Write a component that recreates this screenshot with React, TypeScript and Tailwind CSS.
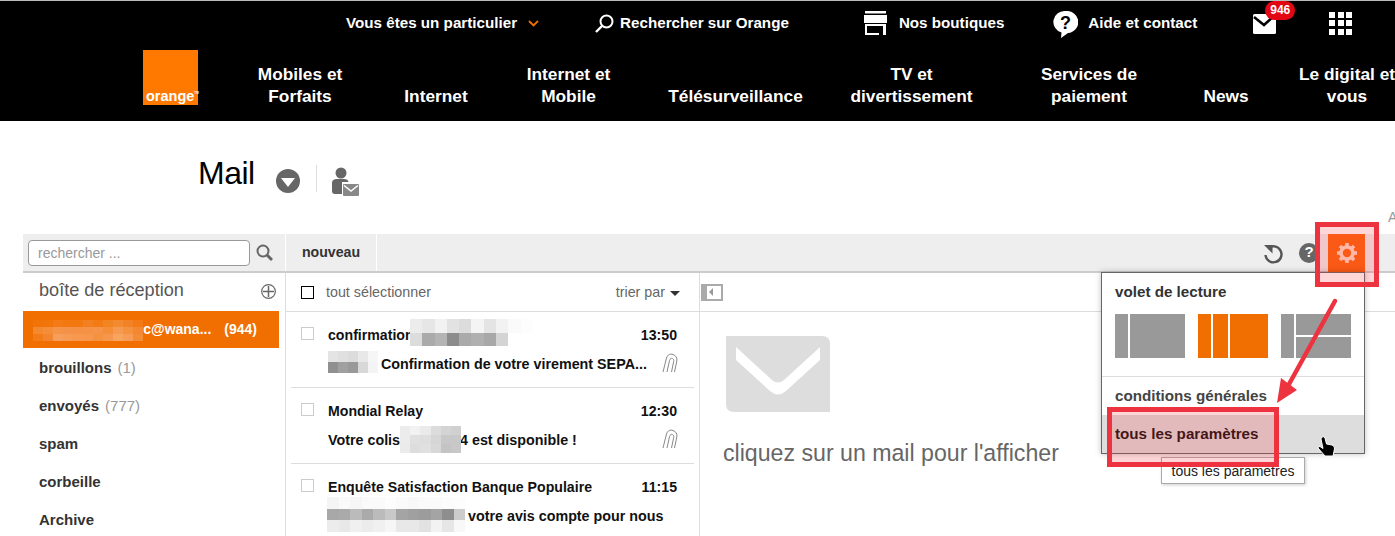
const topLinks = "flex items-center text-[15.2px] font-bold text-white";

const navItems = [
  { lines: ["Mobiles et", "Forfaits"], w: "w-[136px]" },
  { lines: ["Internet"], w: "w-[136px]" },
  { lines: ["Internet et", "Mobile"], w: "w-[129px]" },
  { lines: ["Télésurveillance"], w: "w-[205px]" },
  { lines: ["TV et", "divertissement"], w: "w-[147px]" },
  { lines: ["Services de", "paiement"], w: "w-[208px]" },
  { lines: ["News"], w: "w-[66px]" },
  { lines: ["Le digital et", "vous"], w: "w-[176px]" },
];

const folders = [
  { name: "brouillons", count: "(1)" },
  { name: "envoyés", count: "(777)" },
  { name: "spam" },
  { name: "corbeille" },
  { name: "Archive" },
];

// pixelated patches that hide private data in the screenshot
const Mosaic = ({
  className,
  cell,
  rowH,
  cols,
  colors,
}: {
  className: string;
  cell: number;
  rowH: number;
  cols: number;
  colors: string[];
}) => (
  <div
    className={`absolute grid ${className}`}
    style={{ gridTemplateColumns: `repeat(${cols}, ${cell}px)`, gridAutoRows: `${rowH}px` }}
  >
    {colors.map((c, i) => (
      <div key={i} style={{ background: c }} />
    ))}
  </div>
);

const Clip = () => (
  <svg width="16" height="20" viewBox="0 0 16 20" fill="none" stroke="#888" strokeWidth="1" className="absolute right-[16px] bottom-[14px]">
    <path d="M1 19 L4.500 5 C5.500 1.500 8.500 0.500 11 1.500 C14 2.500 15.500 5 14.800 8 L12.500 19" />
    <path d="M5 19 L7.500 7.500 C8 5.500 9.500 5 10.500 5.500 C11.500 6 12 7 11.700 8.500 L9.500 19" />
  </svg>
);

const Row = ({
  from,
  time,
  children,
}: {
  from: string;
  time: string;
  children: React.ReactNode;
}) => (
  <div className="relative mx-[5px] h-[76px] border-b border-[#ddd] pl-[37px] pr-[17px] pt-[14px] text-[14.3px] font-bold text-[#111]">
    <div className="absolute left-[10px] top-[15px] size-[13px] border border-[#ccc]" />
    <div className="flex h-[20px] items-center justify-between text-[14.15px]">
      <span>{from}</span>
      <span>{time}</span>
    </div>
    <div className="mt-[9px] flex h-[20px] items-center whitespace-nowrap">{children}</div>
  </div>
);

const Thumb = ({ children }: { children: React.ReactNode }) => (
  <div className="flex h-[44px] w-[70px] gap-[2px]">{children}</div>
);

export default function App() {
  return (
    <div className="relative h-[536px] w-[1395px] overflow-hidden bg-white font-['Liberation_Sans',Arial,sans-serif]">
      <header className="h-[121px] overflow-hidden border-t border-[#bbb] bg-black">
        <div className="flex h-[44px] items-center pl-[346px]">
          <span className={topLinks}>Vous êtes un particulier</span>
          <svg width="11" height="7" viewBox="0 0 11 7" fill="none" stroke="#f16e00" strokeWidth="1.800" className="ml-[11px]">
            <path d="M1 1 L5.500 5.500 L10 1" />
          </svg>
          <svg width="19" height="19" viewBox="0 0 19 19" fill="none" stroke="#fff" strokeWidth="2" className="ml-[56px]">
            <circle cx="11.500" cy="7.500" r="6" />
            <path d="M7 12 L1 18" strokeWidth="2.400" />
          </svg>
          <span className={`${topLinks} ml-[6px]`}>Rechercher sur Orange</span>
          <svg width="23" height="24" viewBox="0 0 23 24" className="ml-[75px]">
            <rect x="1" y="0" width="21" height="2.500" fill="#fff" />
            <rect x="0" y="4" width="23" height="8" fill="#fff" />
            <path fillRule="evenodd" d="M1 13 H22 V24 H19 V15 H1 Z M1 15 H3 V22 H15 V24 H1 Z" fill="#fff" />
          </svg>
          <span className={`${topLinks} ml-[12px]`}>Nos boutiques</span>
          <div className="relative ml-[49px] size-[25px]">
            <svg width="25" height="27" viewBox="0 0 25 27">
              <path d="M12.500 0 A11.500 11 0 0 1 15 22 L8 27 L8.500 21.500 A11.500 11 0 0 1 12.500 0 Z" fill="#fff" />
              <text x="12.500" y="18" textAnchor="middle" fontSize="18" fontWeight="700" fill="#000">?</text>
            </svg>
          </div>
          <span className={`${topLinks} ml-[10px]`}>Aide et contact</span>
          <div className="relative ml-[56px] h-[21px] w-[25px]">
            <svg width="25" height="21" viewBox="0 0 25 21">
              <rect width="23" height="20" y="1" rx="1.500" fill="#fff" />
              <path d="M1 4 L11 12 L22 2" fill="none" stroke="#000" strokeWidth="2.500" />
            </svg>
            <span className="absolute left-[12px] top-[-12px] flex h-[19px] w-[30px] items-center justify-center rounded-full bg-[#e30613] text-[12px] font-bold text-white">
              946
            </span>
          </div>
          <div className="ml-[51px] grid grid-cols-3 gap-[2.5px]">
            {Array.from({ length: 9 }).map((_, i) => (
              <div key={i} className="size-[6px] bg-white" />
            ))}
          </div>
        </div>
        <div className="flex items-start pl-[143px] pt-[5px]">
          <div className="flex size-[55px] shrink-0 items-end bg-[#ff7900] pl-[3px] text-[14.5px] font-bold leading-[17px] text-white">
            orange
            <span className="mb-[10px] text-[3px] leading-none">TM</span>
          </div>
          <div className="ml-[34px] flex h-[57px] shrink-0 items-end text-[17.3px] font-bold leading-[22px] text-white">
            {navItems.map((n) => (
              <div key={n.lines[0]} className={`${n.w} shrink-0 text-center whitespace-nowrap`}>
                {n.lines.map((l) => (
                  <div key={l}>{l}</div>
                ))}
              </div>
            ))}
          </div>
        </div>
      </header>

      <div className="flex h-[113px] items-start pl-[198px] pt-[34px]">
        <h1 className="text-[32px] leading-[36px] tracking-[-0.5px] text-black">Mail</h1>
        <div className="ml-[21px] mt-[14px] flex size-[24px] items-center justify-center rounded-full bg-[#666]">
          <div className="mt-[3px] border-x-[7px] border-t-[9px] border-x-transparent border-t-white" />
        </div>
        <div className="ml-[16px] mt-[10px] h-[27px] w-px bg-[#ddd]" />
        <svg width="28" height="29" viewBox="0 0 28 29" className="ml-[15px] mt-[12px]">
          <circle cx="9" cy="6" r="5.500" fill="#666" />
          <path d="M0 24 V16 Q0 12 5 12 H12 Q16 12 16.500 15 H10 V27 H3 Q0 27 0 24 Z" fill="#666" />
          <rect x="11" y="17" width="16" height="12" rx="1" fill="#888" />
          <path d="M12 18.500 L19 24 L26 18.500" fill="none" stroke="#fff" strokeWidth="1.500" />
        </svg>
      </div>

      <div className="ml-[23px] flex h-[39px] border-b-2 border-[#ccc] bg-[#eee]">
        <div className="flex w-[263px] shrink-0 items-center border-r border-white pl-[5px]">
          <div className="flex h-[26px] w-[222px] items-center rounded-[4px] border border-[#999] bg-white pl-[9px] pt-[1px] text-[14px] text-[#999]">
            rechercher ...
          </div>
          <svg width="17" height="18" viewBox="0 0 17 18" fill="none" stroke="#666" className="ml-[6px]">
            <circle cx="7" cy="7" r="5.500" strokeWidth="2" />
            <path d="M11 11 L16 16" strokeWidth="3" />
          </svg>
        </div>
        <div className="flex w-[91px] shrink-0 items-center justify-center border-r border-white pt-[1px] text-[14.15px] font-bold text-[#333]">
          nouveau
        </div>
        <div className="flex flex-1 items-center justify-end pr-[30px]">
          <svg width="20" height="21" viewBox="0 0 20 21" fill="none" className="mr-[16px] mt-[2px]">
            <path d="M5 5.500 A8 8 0 1 1 2.500 12" stroke="#555" strokeWidth="2.400" />
            <path d="M1 2 L9.500 2 L9.500 10.500 Z" fill="#555" />
          </svg>
          <div className="mr-[9px] flex size-[20px] items-center justify-center rounded-full bg-[#666] text-[15px] font-bold text-white">
            ?
          </div>
          <div className="flex h-[38px] w-[37px] items-center justify-center self-start bg-[#f9630d]">
            <svg width="20" height="20" viewBox="0 0 20 20" fill="none" stroke="#ffd9c4">
              <circle cx="10" cy="10" r="6" strokeWidth="3.600" />
              <path strokeWidth="3.500" d="M10 0 V3 M10 17 V20 M0 10 H3 M17 10 H20 M2.900 2.900 L5 5 M15 15 L17.100 17.100 M2.900 17.100 L5 15 M15 5 L17.100 2.900" />
            </svg>
          </div>
        </div>
      </div>

      <div className="ml-[23px] flex h-[263px]">
        <aside className="w-[263px] shrink-0 border-r border-[#ddd] pr-[6px]">
          <div className="flex h-[38px] items-center justify-between pb-[2px] pl-[16px] pr-[3px] text-[18.1px] text-[#555]">
            boîte de réception
            <svg width="15" height="15" viewBox="0 0 15 15" fill="none" stroke="#666" strokeWidth="1.200">
              <circle cx="7.500" cy="7.500" r="6.800" />
              <path d="M7.500 2 V13 M2 7.500 H13" strokeWidth="1.500" />
            </svg>
          </div>
          <div className="relative flex h-[37px] items-center justify-end bg-[#f16e00] pr-[22px] text-[14px] font-bold text-white">
            <span>c@wana...</span>
            <span className="ml-[13px]">(944)</span>
            <Mosaic
              className="left-[10px] top-[9px]"
              cell={10}
              rowH={7}
              cols={11}
              colors={[
                "#f27409", "#f2750c", "#f37a14", "#f3780f", "#f37810", "#f38020", "#f37a14", "#f38422", "#f38a30", "#f38226", "#f37a14",
                "#f38a30", "#f48e38", "#f59448", "#f5924a", "#f59046", "#f59245", "#f59448", "#f48e38", "#f59a52", "#f4923e", "#f48832",
                "#f37c18", "#f38530", "#f79e5c", "#f79a54", "#f7984e", "#f7964c", "#f59240", "#f6964c", "#f9a45e", "#f79c56", "#f48c36",
              ]}
            />
          </div>
          <ul className="text-[15px] font-bold text-[#333]">
            {folders.map((f) => (
              <li key={f.name} className="flex h-[38px] items-center pl-[16px] pt-[2px]">
                {f.name}
                {f.count && <span className="ml-[6px] font-normal text-[#999]">{f.count}</span>}
              </li>
            ))}
          </ul>
        </aside>

        <section className="w-[414px] shrink-0 border-r border-[#ddd]">
          <div className="flex h-[39px] items-center border-b border-[#ddd] pl-[15px] pr-[19px] text-[14.3px] text-[#666]">
            <div className="size-[13px] border border-black" />
            <span className="ml-[12px] pt-[1px]">tout sélectionner</span>
            <span className="ml-auto pt-[1px]">trier par</span>
            <div className="ml-[5px] mt-[2px] border-x-[5px] border-t-[5px] border-x-transparent border-t-[#333]" />
          </div>
          <Row from="confirmation-" time="13:50">
            <span className="ml-[53px]">Confirmation de votre virement SEPA...</span>
            <Clip />
            <Mosaic
              className="left-[37px] top-[39px]"
              cell={10}
              rowH={11}
              cols={5}
              colors={[
                "#e4e4e4", "#e0e0e0", "#dcdcdc", "#e8e8e8", "#f6f6f6",
                "#909090", "#a0a0a0", "#999", "#d8d8d8", "#f4f4f4",
              ]}
            />
            <Mosaic
              className="left-[119px] top-[7px]"
              cell={12.3}
              rowH={13.5}
              cols={10}
              colors={[
                "#ececec", "#e6e6e6", "#f2f2f2", "#e2e2e2", "#dcdcdc", "#f4f4f4", "#e4e4e4", "#f2f2f2", "#fafafa", "#fdfdfd",
                "#dcdcdc", "#aaa", "#b4b4b4", "#8c8c8c", "#aaa", "#b0b0b0", "#a8a8a8", "#d4d4d4", "#fff", "#fff",
              ]}
            />
          </Row>
          <Row from="Mondial Relay" time="12:30">
            Votre colis
            <span className="ml-[60px]">4 est disponible !</span>
            <Clip />
            <Mosaic
              className="left-[109px] top-[38px]"
              cell={10.2}
              rowH={9}
              cols={6}
              colors={[
                "#ececec", "#f2f2f2", "#eaeaea", "#dcdcdc", "#d4d4d4", "#d0d0d0",
                "#ececec", "#e0e0e0", "#dedede", "#d6d6d6", "#c8c8c8", "#c8c8c8",
                "#ebebeb", "#ddd", "#e0e0e0", "#d8d8d8", "#c4c4c4", "#c8c8c8",
              ]}
            />
          </Row>
          <Row from="Enquête Satisfaction Banque Populaire" time="11:15">
            <span className="ml-[140px]">votre avis compte pour nous</span>
            <Mosaic
              className="left-[36px] top-[33px]"
              cell={11.5}
              rowH={11.5}
              cols={12}
              colors={[
                "#f4f4f4", "#fafafa", "#f6f6f6", "#fafafa", "#fafafa", "#fdfdfd", "#fafafa", "#f8f8f8", "#fafafa", "#fafafa", "#fcfcfc", "#fdfdfd",
                "#a8a8a8", "#aaa", "#bbb", "#aaa", "#bbb", "#c8c8c8", "#a4a4a4", "#a0a0a0", "#9c9c9c", "#a4a4a4", "#8e8e8e", "#ccc",
                "#ececec", "#e8e8e8", "#f0f0f0", "#ececec", "#f0f0f0", "#f6f6f6", "#e8e8e8", "#e8e8e8", "#e2e2e2", "#f2f2f2", "#e6e6e6", "#f8f8f8",
              ]}
            />
          </Row>
        </section>

        <section className="flex-1">
          <div className="flex h-[39px] items-center border-b border-[#ddd]">
            <div className="ml-px flex h-[17px] w-[22px] items-center border-2 border-l-[6px] border-[#aaa] bg-white">
              <div className="ml-[2px] border-y-[4px] border-r-[4px] border-y-transparent border-r-[#999]" />
            </div>
          </div>
          <svg width="104" height="76" viewBox="0 0 104 76" className="ml-[26px] mt-[24px]">
            <path d="M0 0 H96 Q104 0 104 8 V76 H8 Q0 76 0 68 Z" fill="#ddd" />
            <path d="M10 11 L46 44 Q52 49 58 44 L94 11 V24 L60 55 Q52 62 44 55 L10 24 Z" fill="#fff" />
          </svg>
          <p className="ml-[23px] mt-[26px] text-[23.15px] leading-[30px] text-[#666]">cliquez sur un mail pour l'afficher</p>
        </section>
      </div>

      <span className="absolute left-[1388px] top-[207px] text-[14px] text-[#999]">A</span>

      {/* settings menu */}
      <div className="absolute left-[1101px] top-[272px] h-[182px] w-[264px] border border-[#666] bg-white shadow-[0_0_6px_rgba(0,0,0,0.25)]">
        <div className="flex h-[38px] items-center pl-[13px] text-[15.2px] font-bold text-[#333]">volet de lecture</div>
        <div className="ml-[13px] mt-[3px] flex gap-[13px]">
          <Thumb>
            <div className="w-[13px] bg-[#999]" />
            <div className="flex-1 bg-[#999]" />
          </Thumb>
          <Thumb>
            <div className="w-[13px] bg-[#f16e00]" />
            <div className="w-[15px] bg-[#f16e00]" />
            <div className="flex-1 bg-[#f16e00]" />
          </Thumb>
          <Thumb>
            <div className="w-[13px] bg-[#999]" />
            <div className="flex flex-1 flex-col gap-[2px]">
              <div className="flex-1 bg-[#999]" />
              <div className="flex-1 bg-[#999]" />
            </div>
          </Thumb>
        </div>
        <div className="mt-[18px] flex h-[39px] items-center border-t border-[#ddd] pl-[13px] text-[15.2px] font-bold text-[#444]">
          conditions générales
        </div>
        <div className="flex h-[38px] items-center bg-[#ddd] pl-[13px] text-[15.2px] font-bold text-[#111]">
          tous les paramètres
        </div>
      </div>
      <div className="absolute left-[1161px] top-[457px] flex h-[27px] w-[144px] items-center justify-center border border-[#aaa] bg-white pt-[1px] text-[14px] text-[#222] shadow-[1px_1px_3px_rgba(0,0,0,0.2)]">
        tous les paramètres
      </div>
      <svg width="20" height="21" viewBox="0 0 20 21" className="absolute left-[1317px] top-[436px]">
        <path d="M5 1 Q7 0 8 2 L9.500 8 L15 9 Q18 10 17.500 13 L16 20 H8 L1 12 Q1 10 3 10.500 L6 12.500 L4 3 Q4 2 5 1 Z" fill="#000" stroke="#fff" strokeWidth="1" />
      </svg>

      {/* red annotations drawn over the screenshot */}
      <div className="absolute left-[1315px] top-[222px] h-[65px] w-[64px] border-[5px] border-[#ee3340] bg-[rgba(255,50,60,0.2)]" />
      <div className="absolute left-[1107px] top-[407px] h-[60px] w-[172px] border-[5px] border-[#ee3340] bg-[rgba(255,50,60,0.2)]" />
      <svg width="70" height="115" viewBox="0 0 70 115" className="absolute left-[1272px] top-[296px]">
        <path d="M63 5 L16 90" stroke="#ee3340" strokeWidth="4.500" strokeLinecap="round" />
        <path d="M5 107 L9 82 L25 94 Z" fill="#ee3340" />
      </svg>
    </div>
  );
}
